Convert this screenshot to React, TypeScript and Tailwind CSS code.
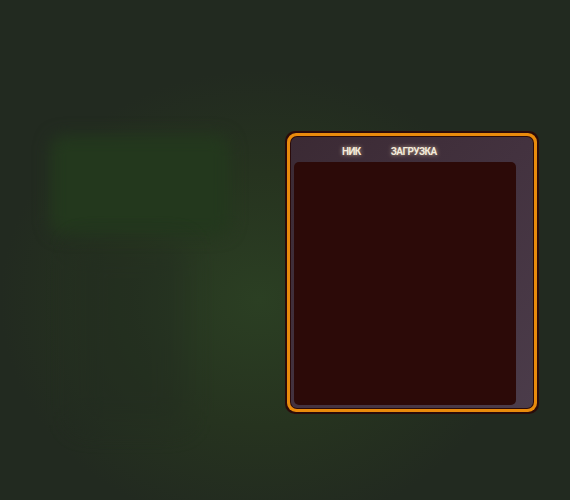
export default function App() {
  return (
    <div className="relative flex h-[500px] w-[570px] overflow-hidden bg-[#222a20] bg-[radial-gradient(ellipse_260px_230px_at_260px_300px,#2b3f23_0%,#26331f_55%,#222a20_100%)] font-['Roboto','Liberation_Sans',sans-serif]">
      {/* blurred shapes behind the panel */}
      <div className="flex w-[285px] shrink-0 flex-col pl-[50px] pt-[135px]">
        <div className="h-[100px] w-[180px] rounded-[14px] bg-[#23381d] blur-[8px]" />
        <div className="ml-[25px] mt-[10px] h-[180px] w-[110px] bg-[#212a21] opacity-40 blur-[14px]" />
      </div>

      <div className="pt-[131px]">
        <div className="h-[283px] w-[254px] rounded-[10px] bg-[#2a0b0a] p-[2px]">
          <div className="h-full rounded-[9px] bg-[#e98b0c] p-[3px]">
            <div className="h-full rounded-[7px] bg-[#2a0b0a] p-px">
              <div className="flex h-full flex-col rounded-[6px] bg-gradient-to-br from-[#3b2a34] via-[#43323f] to-[#4b3c4a] pb-[3px] pl-[3px] pr-[17px]">
                <div className="flex h-[25px] items-center gap-[30px] pl-[48px] pt-[4px] text-[10px] font-bold tracking-[-0.6px] text-[#f3ebdb] [text-shadow:0_0_4px_rgba(255,225,190,0.7)]">
                  <span>НИК</span>
                  <span>ЗАГРУЗКА</span>
                </div>
                <div className="flex-1 rounded-[5px] bg-[#2c0a08]" />
              </div>
            </div>
          </div>
        </div>
      </div>
    </div>
  )
}
